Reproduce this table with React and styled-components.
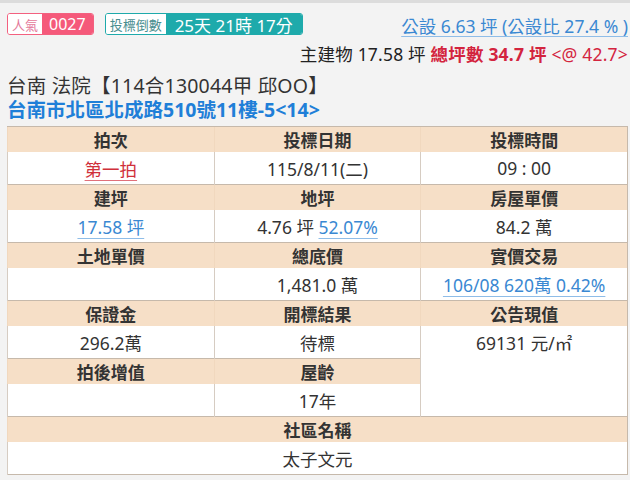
import React from 'react'
import styled, {createGlobalStyle} from 'styled-components'

const GlobalStyle = createGlobalStyle`
  html, body {
    margin: 0;
    padding: 0;
    background: #f3f3f3;
  }
  body {
    font-family: 'Noto Sans', 'Noto Sans CJK TC', sans-serif;
    color: #333;
  }
`

const TopStrip = styled.div`
  height: 3px;
  background: #dcdcdc;
`

const Page = styled.div`
  padding: 10px 2px 0 7px;
`

const MetaRow = styled.div`
  display: flex;
  justify-content: space-between;
  align-items: flex-start;
`

const Badges = styled.div`
  display: flex;
  gap: 11px;
`

const Badge = styled.div`
  display: flex;
  height: 22px;
  border: 1px solid ${p => p.$color};
  border-radius: 3px;
  overflow: hidden;
  box-sizing: border-box;
`

const BadgeLabel = styled.span`
  display: flex;
  align-items: center;
  padding: 0 4px;
  background: #fff;
  color: ${p => p.$color};
  font-size: 13px;
`

const BadgeValue = styled.span`
  display: flex;
  align-items: center;
  padding: 0 ${p => p.$pad || 7}px;
  background: ${p => p.$color};
  color: #fff;
  font-size: ${p => p.$size || 16}px;
`

const Area = styled.a`
  font-size: 17.5px;
  line-height: 24px;
  color: #3a88d2;
  text-decoration: underline;
  text-decoration-color: #8fbde8;
  text-underline-offset: 3px;
  margin-top: 1px;
`

const SizeLine = styled.div`
  text-align: right;
  font-size: 17.5px;
  line-height: 24px;
  letter-spacing: 0.2px;
  color: #222;
  margin-top: 4px;
`

const Red = styled.span`
  color: #d3243e;
  font-weight: ${p => (p.$bold ? 700 : 400)};
`

const Title = styled.div`
  font-size: 19.5px;
  line-height: 24px;
  letter-spacing: 0.2px;
  color: #333;
  margin-top: 8px;
`

const Address = styled.div`
  font-size: 19.5px;
  line-height: 23px;
  font-weight: 700;
  color: #1f7fd8;
`

const Table = styled.table`
  width: 100%;
  margin-top: 5px;
  border-collapse: collapse;
  table-layout: fixed;
  border: 1px solid #c6b9ab;
  background: #fff;
`

const Head = styled.th`
  height: 25px;
  padding: 0;
  background: #f6dfc7;
  font-size: 17px;
  font-weight: 700;
  color: #333;
  text-align: center;
  border-left: 1px solid #f1d8be;
  border-top: 1px solid #c6b9ab;
`

const Cell = styled.td`
  height: 32px;
  padding: 0;
  font-size: 17.5px;
  color: #333;
  text-align: center;
  border-left: 1px solid #d6ccc2;
  background: #fff;
`

const Link = styled.a`
  color: ${p => (p.$red ? '#d0303a' : '#3a88d2')};
  text-decoration: underline;
  text-decoration-color: ${p => (p.$red ? '#e0707a' : '#8fbde8')};
  text-underline-offset: 4px;
`

const App = () => (
  <>
    <GlobalStyle />
    <TopStrip />
    <Page>
      <MetaRow>
        <Badges>
          <Badge $color='#f3607f'>
            <BadgeLabel $color='#e4789a'>人氣</BadgeLabel>
            <BadgeValue $color='#f5597a' $pad={7}>0027</BadgeValue>
          </Badge>
          <Badge $color='#1eaaab'>
            <BadgeLabel $color='#4a8e8f'>投標倒數</BadgeLabel>
            <BadgeValue $color='#1eaaab' $size={17} $pad={9}>25天 21時 17分</BadgeValue>
          </Badge>
        </Badges>
        <Area>公設 6.63 坪 (公設比 27.4 % )</Area>
      </MetaRow>
      <SizeLine>
        主建物 17.58 坪 <Red $bold>總坪數 34.7 坪</Red> <Red>&lt;@ 42.7&gt;</Red>
      </SizeLine>
      <Title>台南 法院【114合130044甲 邱OO】</Title>
      <Address>台南市北區北成路510號11樓-5&lt;14&gt;</Address>
      <Table>
        <tbody>
          <tr>
            <Head>拍次</Head>
            <Head>投標日期</Head>
            <Head>投標時間</Head>
          </tr>
          <tr>
            <Cell><Link $red>第一拍</Link></Cell>
            <Cell>115/8/11(二)</Cell>
            <Cell>09 : 00</Cell>
          </tr>
          <tr>
            <Head>建坪</Head>
            <Head>地坪</Head>
            <Head>房屋單價</Head>
          </tr>
          <tr>
            <Cell><Link>17.58 坪</Link></Cell>
            <Cell>4.76 坪 <Link>52.07%</Link></Cell>
            <Cell>84.2 萬</Cell>
          </tr>
          <tr>
            <Head>土地單價</Head>
            <Head>總底價</Head>
            <Head>實價交易</Head>
          </tr>
          <tr>
            <Cell></Cell>
            <Cell>1,481.0 萬</Cell>
            <Cell><Link>106/08 620萬 0.42%</Link></Cell>
          </tr>
          <tr>
            <Head>保證金</Head>
            <Head>開標結果</Head>
            <Head>公告現值</Head>
          </tr>
          <tr>
            <Cell>296.2萬</Cell>
            <Cell>待標</Cell>
            <Cell>69131 元/㎡</Cell>
          </tr>
          <tr>
            <Head>拍後增值</Head>
            <Head>屋齡</Head>
            <Cell rowSpan={2} />
          </tr>
          <tr>
            <Cell></Cell>
            <Cell>17年</Cell>
          </tr>
          <tr>
            <Head colSpan={3}>社區名稱</Head>
          </tr>
          <tr>
            <Cell colSpan={3}>太子文元</Cell>
          </tr>
        </tbody>
      </Table>
    </Page>
  </>
)

export default App
